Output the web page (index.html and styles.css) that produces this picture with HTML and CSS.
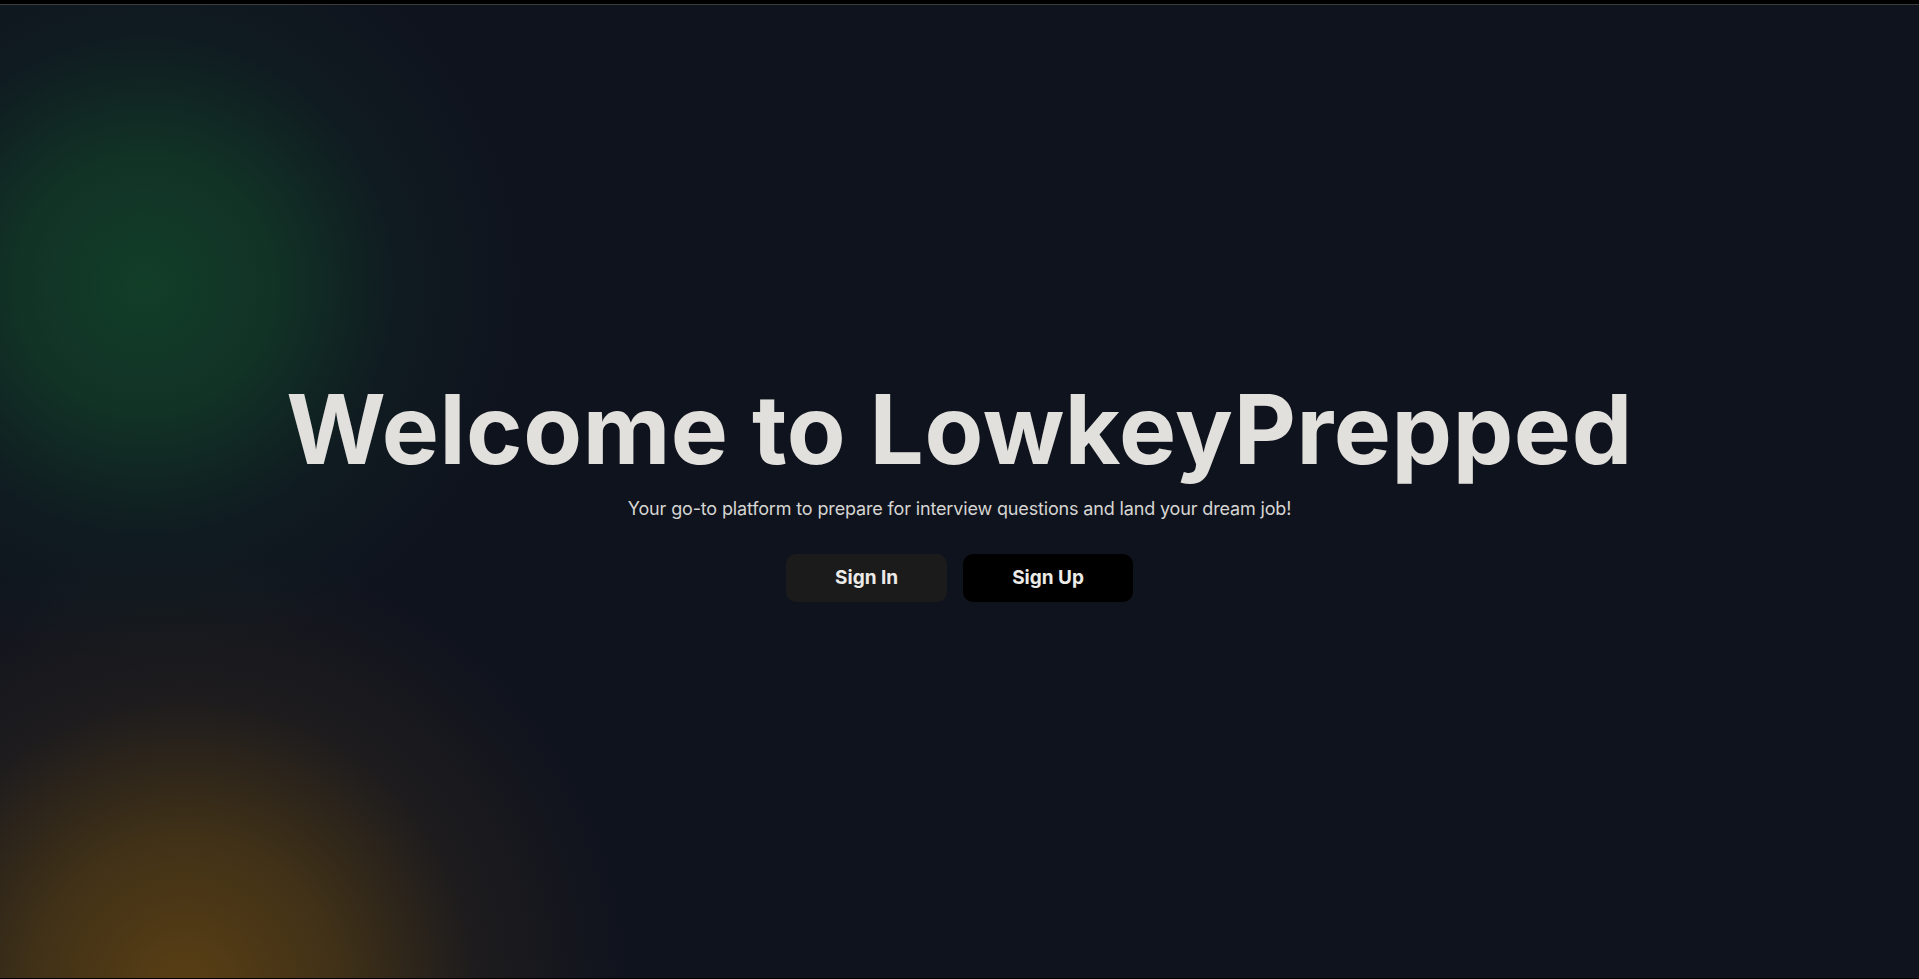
FILE: index.html
```html
<!DOCTYPE html>
<html lang="en">
<head>
<meta charset="utf-8">
<title>LowkeyPrepped</title>
<link rel="stylesheet" href="styles.css">
</head>
<body>
<div class="page">
  <div class="topbar"></div>
  <main class="hero">
    <h1 class="hero-title">Welcome to LowkeyPrepped</h1>
    <p class="hero-subtitle">Your go-to platform to prepare for interview questions and land your dream job!</p>
    <div class="hero-actions">
      <button class="btn btn-dark">Sign In</button>
      <button class="btn btn-black">Sign Up</button>
    </div>
  </main>
</div>
</body>
</html>
```

FILE: styles.css
```css
* { box-sizing: border-box; }
html, body { margin: 0; padding: 0; }
body {
  font-family: "Inter", "Noto Sans", sans-serif;
  background: #000;
}
.page {
  height: 100vh;
  display: flex;
  flex-direction: column;
  border-bottom: 1px solid #000;
  background:
    radial-gradient(circle at 145px 285px, rgba(18,62,40,1) 0px, rgba(18,58,40,0.8) 130px, rgba(16,40,36,0.4) 250px, rgba(15,19,30,0) 380px),
    radial-gradient(circle at 185px 990px, rgba(90,63,20,1) 0px, rgba(74,55,22,0.85) 150px, rgba(44,36,28,0.5) 290px, rgba(15,19,30,0) 450px),
    #0f131e;
}
.topbar {
  height: 5px;
  background: #000;
  border-bottom: 1px solid #3c3c3c;
  flex: none;
}
.hero {
  flex: 1;
  display: flex;
  flex-direction: column;
  align-items: center;
  justify-content: center;
}
.hero-title {
  margin: 0;
  font-size: 96px;
  line-height: 1;
  font-weight: 700;
  color: #e2e0dc;
  letter-spacing: 0.6px;
}
.hero-subtitle {
  margin: 18px 0 0;
  font-size: 18px;
  line-height: 28px;
  color: #d6d5d2;
  letter-spacing: -0.15px;
}
.hero-actions {
  margin-top: 31px;
  display: flex;
  gap: 16px;
}
.btn {
  font-family: "Inter", "Noto Sans", sans-serif;
  font-size: 19px;
  font-weight: 700;
  line-height: 24px;
  padding: 12px 49px;
  border: none;
  border-radius: 10px;
  color: #ecebe8;
  cursor: pointer;
}
.btn-dark { background: #1b1b1c; }
.btn-black { background: #000; }
```
